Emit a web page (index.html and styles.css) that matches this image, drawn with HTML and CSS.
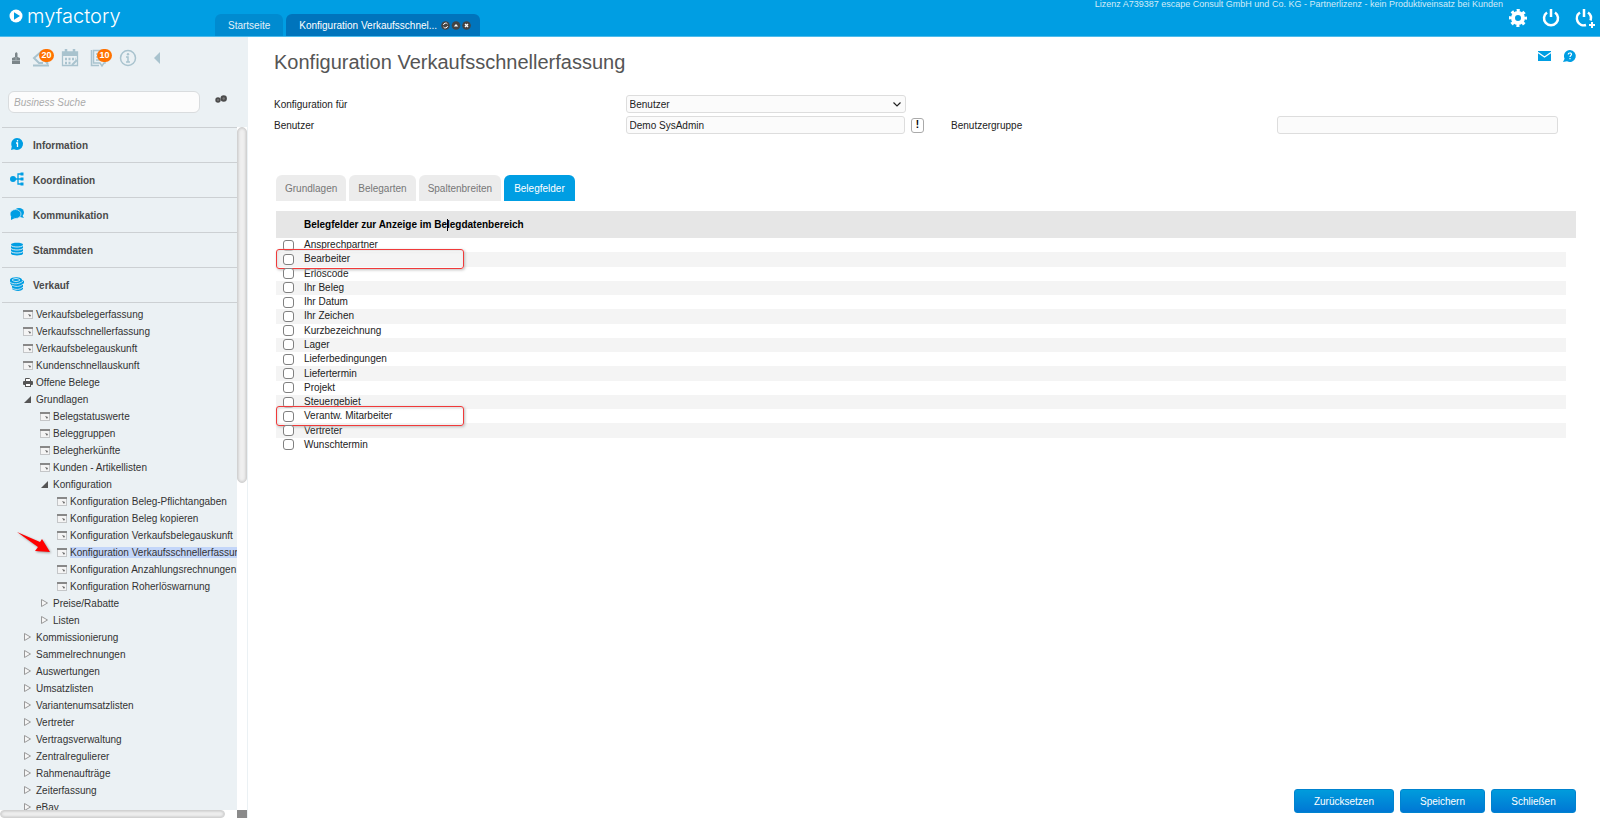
FILE: index.html
```
<!DOCTYPE html>
<html lang="de">
<head>
  <meta charset="UTF-8" />
  <meta name="viewport" content="width=device-width, initial-scale=1.0" />
  <title>myfactory - Konfiguration Verkaufsschnellerfassung</title>
  <link rel="stylesheet" href="styles.css">
</head>
<body>
  <!-- Shared icons -->
  <svg class="defs" aria-hidden="true">
    <symbol id="win" viewBox="0 0 10 9">
      <rect x="0.5" y="0.5" width="9" height="8" fill="#f4f4f4" stroke="#c4c6c8" />
      <rect x="0" y="0" width="10" height="2" fill="#888" />
      <path d="M5 4l3 1-1 2z" fill="#666" />
    </symbol>
    <symbol id="printer" viewBox="0 0 10 9">
      <path d="M2.5 3V.5h4l1 1V3" fill="#fff" stroke="#555" />
      <rect x="0" y="3" width="10" height="4" rx="1" fill="#555" />
      <rect x="2.5" y="5.5" width="5" height="3" fill="#fff" stroke="#555" />
    </symbol>
    <symbol id="open" viewBox="0 0 10 9">
      <path d="M8 1v7H1z" fill="#555" />
    </symbol>
    <symbol id="closed" viewBox="0 0 10 9">
      <path d="M1.500 .5v7l6-3.500z" fill="#f6f6f6" stroke="#999" />
    </symbol>
  </svg>

  <header>
    <a class="logo" href="#">
      <svg width="14" height="14" viewBox="0 0 14 14"><circle cx="7" cy="7" r="6.500" fill="#fff" /><path d="M5 3.300v7.400L11 7z" fill="#009ee3" /></svg>
      <span>myfactory</span>
    </a>
    <nav class="window-tabs">
      <a href="#">Startseite</a>
      <a href="#" class="active">Konfiguration Verkaufsschnel...
        <svg width="30" height="9" viewBox="0 0 30 9">
          <g fill="#444"><circle cx="4.500" cy="4.500" r="4.300" /><circle cx="15" cy="4.500" r="4.300" /><circle cx="25.500" cy="4.500" r="4.300" /></g>
          <path d="M6.500 3a2.200 2.200 0 0 0-4 1M2.500 6a2.200 2.200 0 0 0 4-1" fill="none" stroke="#fff" />
          <path d="M12.800 5.500h4.400L15 3z" fill="#fff" />
          <path d="M24 3l3 3M27 3l-3 3" stroke="#fff" stroke-width="1.400" />
        </svg>
      </a>
    </nav>
    <p class="license">Lizenz A739387 escape Consult GmbH und Co. KG - Partnerlizenz - kein Produktiveinsatz bei Kunden</p>
    <div class="header-buttons">
      <button aria-label="Einstellungen">
        <svg width="20" height="20" viewBox="0 0 20 20"><circle cx="10" cy="10" r="5" fill="none" stroke="#fff" stroke-width="4" /><circle cx="10" cy="10" r="7.500" fill="none" stroke="#fff" stroke-width="3" stroke-dasharray="3 2.890" stroke-dashoffset="1.500" /></svg>
      </button>
      <button aria-label="Abmelden">
        <svg width="20" height="20" viewBox="0 0 20 20"><path d="M6 4.500a7 7 0 1 0 8 0M10 1v8" fill="none" stroke="#fff" stroke-width="2.500" /></svg>
      </button>
      <button aria-label="Neu anmelden">
        <svg width="20" height="20" viewBox="0 0 20 20"><path d="M6 4.500a7 7 0 0 0 6 12.500M14 4.500a7 7 0 0 1 2.500 8M10 1v8" fill="none" stroke="#fff" stroke-width="2.500" /><path d="M18 14v6M15 17h6" stroke="#fff" stroke-width="2" /></svg>
      </button>
    </div>
  </header>

  <div class="page">
    <aside>
      <div class="toolbar">
        <a href="#" aria-label="Status"><svg width="10" height="14" viewBox="0 0 10 14"><path d="M4 2.500q1.500-2.500 2.500 0V6L9 7v6H1V7l3-1z" fill="#7b8589" /><path d="M5 6v4M1 9.500h8" stroke="#a5afb3" /></svg></a>
        <a href="#" aria-label="Eingang"><svg width="18" height="18" viewBox="0 0 18 18"><path d="M10 2L2 9l5 5h4M1 16.500h16M11 9l5 6" fill="none" stroke="#a9c3ce" stroke-width="2" /></svg><span class="badge">20</span></a>
        <a href="#" aria-label="Kalender"><svg width="18" height="18" viewBox="0 0 18 18"><path d="M1.500 3h15v13.500h-15z" fill="none" stroke="#a9c3ce" stroke-width="1.300" /><path d="M1 5h16" stroke="#a9c3ce" stroke-width="4" /><path d="M5 0v5M13 0v5" stroke="#a9c3ce" stroke-width="2.500" /><path d="M4 10h11M4 14h6" stroke="#a9c3ce" stroke-width="2.500" stroke-dasharray="2 1.500" /><path d="M11 16l5-5" stroke="#a9c3ce" stroke-width="2" /></svg></a>
        <a href="#" aria-label="Aufgaben"><svg width="18" height="18" viewBox="0 0 18 18"><path d="M3.500 1.500H15V14h-1l-2 3-2-3H3.500z" fill="none" stroke="#a9c3ce" stroke-width="1.500" /><path d="M1.500 1v15.500H9M6 5h6M6 8h6M6 11h6" fill="none" stroke="#a9c3ce" stroke-width="1.500" /></svg><span class="badge">10</span></a>
        <a href="#" aria-label="Info"><svg width="18" height="18" viewBox="0 0 18 18"><circle cx="9" cy="9" r="7.500" fill="none" stroke="#a9c3ce" stroke-width="1.500" /><path d="M7 8h2v5M7 13h4" fill="none" stroke="#a9c3ce" stroke-width="1.500" /><circle cx="9" cy="5.200" r="1.200" fill="#a9c3ce" /></svg></a>
        <a href="#" class="collapse" aria-label="Einklappen"><svg width="6" height="12" viewBox="0 0 6 12"><path d="M6 0v12L0 6z" fill="#a9c3ce" /></svg></a>
      </div>

      <div class="search">
        <input type="text" placeholder="Business Suche" aria-label="Business Suche" />
        <button aria-label="Suchen"><svg width="12" height="8" viewBox="0 0 12 8"><circle cx="3" cy="5" r="2.700" fill="#4c4c4c" /><circle cx="8.700" cy="3.500" r="3.200" fill="#4c4c4c" /><circle cx="3" cy="5" r="1" fill="#777" /><circle cx="8.700" cy="3.500" r="1.200" fill="#777" /></svg></button>
      </div>

      <div class="menu-area">
        <nav class="menu">
          <a class="section" href="#"><svg width="14" height="14" viewBox="0 0 14 14"><path d="M7 1a6 6 0 1 1-3 11.200L1 13l.8-3.500A6 6 0 0 1 7 1z" fill="#009ee3" /><path d="M6 6h1.500v4M7.500 3v1.500" fill="none" stroke="#fff" stroke-width="1.300" /></svg>Information</a>
          <a class="section" href="#"><svg width="14" height="14" viewBox="0 0 14 14"><circle cx="3" cy="7" r="3" fill="#009ee3" /><path d="M5 7h8M12 2H8v10h4" fill="none" stroke="#009ee3" stroke-width="1.300" /><path d="M10.500.5h3v3h-3zM10.500 5.500h3v3h-3zM10.500 10.500h3v3h-3z" fill="#009ee3" /></svg>Koordination</a>
          <a class="section" href="#"><svg width="14" height="14" viewBox="0 0 14 14"><ellipse cx="9" cy="5.500" rx="5" ry="4.500" fill="#009ee3" /><path d="M12 8l2 3-4-1z" fill="#009ee3" /><ellipse cx="5.500" cy="7" rx="5.500" ry="4.500" fill="#009ee3" stroke="#ebf1f4" stroke-width=".7" /><path d="M1 9v4l4-2z" fill="#009ee3" /></svg>Kommunikation</a>
          <a class="section" href="#"><svg width="14" height="14" viewBox="0 0 14 14"><path d="M1 2.500C1 0 13 0 13 2.500v9c0 2.500-12 2.500-12 0z" fill="#009ee3" /><path d="M1 3.500c2 2 10 2 12 0M1 6.500c2 2 10 2 12 0M1 9.500c2 2 10 2 12 0" fill="none" stroke="#ebf1f4" stroke-width=".9" /></svg>Stammdaten</a>
          <a class="section" href="#"><svg width="14" height="14" viewBox="0 0 14 14"><path d="M0 2.500C1-.5 12-.5 12 3l2 1v2l-1 1v5c-2 3-9 2-11 0V9L0 6z" fill="#009ee3" /><path d="M2 3c2 2 6 2 8 0-2-2-6-2-8 0M0 5c3 3 10 2 13-1M2 8c3 2 8 2 11-1M2 11c3 2 8 2 11-1" fill="none" stroke="#ebf1f4" stroke-width=".8" /></svg>Verkauf</a>

          <ul class="tree">
            <li><a href="#"><svg><use href="#win" /></svg><span>Verkaufsbelegerfassung</span></a></li>
            <li><a href="#"><svg><use href="#win" /></svg><span>Verkaufsschnellerfassung</span></a></li>
            <li><a href="#"><svg><use href="#win" /></svg><span>Verkaufsbelegauskunft</span></a></li>
            <li><a href="#"><svg><use href="#win" /></svg><span>Kundenschnellauskunft</span></a></li>
            <li><a href="#"><svg><use href="#printer" /></svg><span>Offene Belege</span></a></li>
            <li><a href="#"><svg><use href="#open" /></svg><span>Grundlagen</span></a>
              <ul>
                <li><a href="#"><svg><use href="#win" /></svg><span>Belegstatuswerte</span></a></li>
                <li><a href="#"><svg><use href="#win" /></svg><span>Beleggruppen</span></a></li>
                <li><a href="#"><svg><use href="#win" /></svg><span>Belegherkünfte</span></a></li>
                <li><a href="#"><svg><use href="#win" /></svg><span>Kunden - Artikellisten</span></a></li>
                <li><a href="#"><svg><use href="#open" /></svg><span>Konfiguration</span></a>
                  <ul>
                    <li><a href="#"><svg><use href="#win" /></svg><span>Konfiguration Beleg-Pflichtangaben</span></a></li>
                    <li><a href="#"><svg><use href="#win" /></svg><span>Konfiguration Beleg kopieren</span></a></li>
                    <li><a href="#"><svg><use href="#win" /></svg><span>Konfiguration Verkaufsbelegauskunft</span></a></li>
                    <li class="selected"><a href="#"><svg><use href="#win" /></svg><span>Konfiguration Verkaufsschnellerfassung</span></a>
                      <svg class="arrow" viewBox="0 0 36 24"><path d="M1 2l23 10 2-3 8 13-15-1 3-4z" fill="#f00" /></svg>
                    </li>
                    <li><a href="#"><svg><use href="#win" /></svg><span>Konfiguration Anzahlungsrechnungen</span></a></li>
                    <li><a href="#"><svg><use href="#win" /></svg><span>Konfiguration Roherlöswarnung</span></a></li>
                  </ul>
                </li>
                <li><a href="#"><svg><use href="#closed" /></svg><span>Preise/Rabatte</span></a></li>
                <li><a href="#"><svg><use href="#closed" /></svg><span>Listen</span></a></li>
              </ul>
            </li>
            <li><a href="#"><svg><use href="#closed" /></svg><span>Kommissionierung</span></a></li>
            <li><a href="#"><svg><use href="#closed" /></svg><span>Sammelrechnungen</span></a></li>
            <li><a href="#"><svg><use href="#closed" /></svg><span>Auswertungen</span></a></li>
            <li><a href="#"><svg><use href="#closed" /></svg><span>Umsatzlisten</span></a></li>
            <li><a href="#"><svg><use href="#closed" /></svg><span>Variantenumsatzlisten</span></a></li>
            <li><a href="#"><svg><use href="#closed" /></svg><span>Vertreter</span></a></li>
            <li><a href="#"><svg><use href="#closed" /></svg><span>Vertragsverwaltung</span></a></li>
            <li><a href="#"><svg><use href="#closed" /></svg><span>Zentralregulierer</span></a></li>
            <li><a href="#"><svg><use href="#closed" /></svg><span>Rahmenaufträge</span></a></li>
            <li><a href="#"><svg><use href="#closed" /></svg><span>Zeiterfassung</span></a></li>
            <li><a href="#"><svg><use href="#closed" /></svg><span>eBay</span></a></li>
          </ul>
        </nav>
        <div class="scroll-y"><div class="thumb"></div></div>
        <div class="scroll-x"><div class="thumb"></div></div>
        <div class="corner"></div>
      </div>
    </aside>

    <main>
      <div class="title">
        <h1>Konfiguration Verkaufsschnellerfassung</h1>
        <a href="#" aria-label="E-Mail"><svg width="13" height="10" viewBox="0 0 13 10"><path d="M0 0h13v10H0z" fill="#009ee3" /><path d="M0 1.500l6.500 4.500L13 1.500" fill="none" stroke="#fff" stroke-width="1.300" /></svg></a>
        <a href="#" aria-label="Hilfe"><svg width="13" height="12" viewBox="0 0 13 12"><path d="M7 0a6 6 0 1 1-3 11.300L0 12l1.600-3.300A6 6 0 0 1 7 0z" fill="#009ee3" /><path d="M5.200 4.500C5.200 2.500 8.500 2.500 8.500 4.300 8.500 5.500 7 5.500 7 7M7 8v1.300" fill="none" stroke="#fff" stroke-width="1.200" /></svg></a>
      </div>

      <!-- Filter -->
      <form class="filter">
        <label for="scope">Konfiguration für</label>
        <div class="field"><select id="scope"><option>Benutzer</option></select></div>
        <label class="newline" for="user">Benutzer</label>
        <div class="field with-button">
          <input type="text" id="user" value="Demo SysAdmin" />
          <button type="button">!</button>
        </div>
        <label for="group">Benutzergruppe</label>
        <div class="field last"><input type="text" id="group" /></div>
      </form>

      <nav class="tabs">
        <button>Grundlagen</button>
        <button>Belegarten</button>
        <button>Spaltenbreiten</button>
        <button class="active">Belegfelder</button>
      </nav>

      <div class="table-head"><b>Belegfelder zur Anzeige im Be<i class="caret"></i>legdatenbereich</b></div>
      <table class="fields">
        <tr><td><input type="checkbox" id="f1" /></td><td><label for="f1">Ansprechpartner</label></td></tr>
        <tr><td><span class="mark"></span><input type="checkbox" id="f2" /></td><td><label for="f2">Bearbeiter</label></td></tr>
        <tr><td><input type="checkbox" id="f3" /></td><td><label for="f3">Erlöscode</label></td></tr>
        <tr><td><input type="checkbox" id="f4" /></td><td><label for="f4">Ihr Beleg</label></td></tr>
        <tr><td><input type="checkbox" id="f5" /></td><td><label for="f5">Ihr Datum</label></td></tr>
        <tr><td><input type="checkbox" id="f6" /></td><td><label for="f6">Ihr Zeichen</label></td></tr>
        <tr><td><input type="checkbox" id="f7" /></td><td><label for="f7">Kurzbezeichnung</label></td></tr>
        <tr><td><input type="checkbox" id="f8" /></td><td><label for="f8">Lager</label></td></tr>
        <tr><td><input type="checkbox" id="f9" /></td><td><label for="f9">Lieferbedingungen</label></td></tr>
        <tr><td><input type="checkbox" id="f10" /></td><td><label for="f10">Liefertermin</label></td></tr>
        <tr><td><input type="checkbox" id="f11" /></td><td><label for="f11">Projekt</label></td></tr>
        <tr><td><input type="checkbox" id="f12" /></td><td><label for="f12">Steuergebiet</label></td></tr>
        <tr><td><span class="mark"></span><input type="checkbox" id="f13" /></td><td><label for="f13">Verantw. Mitarbeiter</label></td></tr>
        <tr><td><input type="checkbox" id="f14" /></td><td><label for="f14">Vertreter</label></td></tr>
        <tr><td><input type="checkbox" id="f15" /></td><td><label for="f15">Wunschtermin</label></td></tr>
      </table>

      <div class="actions">
        <button>Zurücksetzen</button>
        <button>Speichern</button>
        <button>Schließen</button>
      </div>
    </main>
  </div>
</body>
</html>
```
FILE: styles.css
```
* { box-sizing: border-box; }
body {
  margin: 0;
  height: 100vh;
  display: flex;
  flex-direction: column;
  overflow: hidden;
  font-family: "Liberation Sans", Arial, sans-serif;
  font-size: 10px;
  color: #222;
  background: #fff;
}
a {
  color: inherit;
  text-decoration: none;
}
button, input, select {
  font-family: inherit;
  font-size: 10px;
  color: inherit;
}
button {
  padding: 0;
  border: none;
  background: none;
  cursor: pointer;
}
svg {
  flex: none;
  display: block;
  overflow: visible;
}
.defs {
  position: absolute;
  width: 0;
  height: 0;
}

/* Header */
header {
  flex: none;
  height: 37px;
  display: flex;
  background: #009ee3;
  border-bottom: 1px solid #4dbbeb;
  color: #fff;
}
.logo {
  width: 215px;
  padding-left: 9px;
  display: flex;
  gap: 4px;
  height: 32px;
  align-items: center;
  font-family: Inter, sans-serif;
  font-weight: 300;
  font-size: 20px;
}
.window-tabs {
  display: flex;
  align-items: flex-end;
  gap: 3px;
}
.window-tabs a {
  height: 22px;
  padding: 0 13px;
  display: flex;
  align-items: center;
  gap: 4px;
  background: #008bd0;
  border-radius: 6px 6px 0 0;
  color: #e3f1f9;
}
.window-tabs a.active {
  padding: 0 9px 0 13px;
  background: #0074bc;
  color: #fff;
}
.license {
  margin: 0 0 0 auto;
  line-height: 9px;
  font-size: 9px;
  color: #d3ecf8;
}
.header-buttons {
  display: flex;
  align-items: center;
  gap: 13px;
  padding: 0 6px 0 5px;
}

.page {
  flex: 1;
  min-height: 0;
  display: flex;
}

/* Sidebar */
aside {
  flex: none;
  width: 248px;
  display: flex;
  flex-direction: column;
  background: #ebf1f4;
}
.toolbar {
  height: 42px;
  padding-left: 11px;
  display: flex;
  align-items: center;
  gap: 11px;
}
.toolbar a {
  position: relative;
}
.toolbar .collapse {
  margin-left: 6px;
}
.badge {
  position: absolute;
  top: 0;
  left: 7px;
  width: 15px;
  height: 13px;
  border-radius: 7px;
  background: #ff7200;
  color: #fff;
  font-size: 9px;
  font-weight: bold;
  line-height: 13px;
  text-align: center;
}
.search {
  height: 48px;
  padding: 12px 20px 14px 8px;
  display: flex;
  gap: 15px;
}
.search input {
  width: 192px;
  height: 22px;
  padding: 0 5px;
  border: 1px solid #d9dcde;
  border-radius: 6px;
  background: #fcfcfc;
}
.search input::placeholder {
  color: #aaa;
  font-style: italic;
}
.search button {
  height: 16px;
}
.menu-area {
  flex: 1;
  min-height: 0;
  display: grid;
  grid-template-columns: 1fr 11px;
  grid-template-rows: 1fr 8px;
}
.menu {
  overflow: hidden;
}
.section {
  height: 35px;
  margin-left: 2px;
  padding-left: 8px;
  display: flex;
  align-items: center;
  gap: 9px;
  border-top: 1px solid #ccd0d3;
  font-weight: bold;
  color: #4a4a4a;
}
.section svg {
  margin-bottom: 2px;
}
.tree {
  margin: 0 0 0 2px;
  padding: 3px 0 0 21px;
  border-top: 1px solid #ccd0d3;
  list-style: none;
  color: #333;
}
.tree ul {
  margin: 0;
  padding: 0 0 0 17px;
  list-style: none;
}
.tree a {
  height: 17px;
  display: flex;
  align-items: center;
  gap: 3px;
  white-space: nowrap;
}
.tree a svg {
  width: 10px;
  height: 9px;
}
.selected {
  position: relative;
}
.selected span {
  background: #c3d6f9;
}
.arrow {
  position: absolute;
  left: -41px;
  top: -14px;
  width: 36px;
  height: 24px;
  filter: drop-shadow(1px 1px 1px #999);
}
.scroll-y {
  background: #fff;
  border-right: 1px solid #ebf1f4;
}
.scroll-y .thumb {
  height: 356px;
}
.thumb {
  border: 1px solid #d2d2d2;
  border-radius: 5px;
  background: #efefef;
  box-shadow: inset 0 0 3px #bbb;
}
.scroll-x {
  background: #fff;
}
.scroll-x .thumb {
  width: 95%;
  height: 8px;
}
.corner {
  width: 10px;
  background: #8a8a8a;
}

/* Content */
main {
  flex: 1;
  min-width: 0;
  padding: 0 24px 5px 26px;
  display: flex;
  flex-direction: column;
}
.title {
  height: 50px;
  display: flex;
  align-items: center;
  gap: 12px;
}
.title a {
  margin-bottom: 13px;
}
h1 {
  flex: 1;
  margin: 0;
  font-size: 20px;
  font-weight: normal;
  color: #555;
}
.filter {
  padding: 8px 0 41px;
  display: grid;
  grid-template-columns: 27% 25% 25% 1fr;
  row-gap: 3px;
  align-items: center;
}
.newline {
  grid-column: 1;
}
.field {
  display: flex;
  gap: 6px;
  padding-right: 45px;
}
.with-button {
  padding-right: 27px;
}
.field.last {
  padding-right: 18px;
}
.field input, .field select {
  flex: 1;
  min-width: 0;
  height: 18px;
  padding: 0 3px;
  border: 1px solid #ddd;
  border-radius: 3px;
  background: #fbfbfb;
}
.field select {
  appearance: none;
  background: #fbfbfb url("data:image/svg+xml,%3Csvg xmlns='http://www.w3.org/2000/svg' width='8' height='5'%3E%3Cpath d='M.5.500l3.500 3.500L7.500.500' fill='none' stroke='%23222' stroke-width='1.200'/%3E%3C/svg%3E") no-repeat right 4px center;
}
.field button {
  width: 13px;
  height: 15px;
  align-self: center;
  border: 1px solid #aaa;
  border-radius: 3px;
  font-weight: bold;
  line-height: 12px;
  color: #000;
}
.tabs {
  margin-left: 2px;
  display: flex;
  gap: 3px;
}
.tabs button {
  height: 26px;
  padding: 0 9px;
  border-radius: 6px 6px 0 0;
  background: #ececec;
  color: #777;
}
.tabs button.active {
  padding: 0 10px;
  background: #009ee3;
  color: #fff;
}
.table-head {
  margin: 10px 0 0 2px;
  padding-left: 28px;
  height: 27px;
  line-height: 28px;
  background: #e6e6e6;
  color: #000;
}
.caret {
  position: relative;
}
.caret::after {
  content: "";
  position: absolute;
  left: 0;
  top: 0;
  width: 1px;
  height: 12px;
  background: #000;
}
.fields {
  height: 214px;
  margin: 0 10px 0 2px;
  border-collapse: collapse;
}
.fields tr:nth-child(even) {
  background: #f4f4f4;
}
.fields td {
  padding: 0;
  line-height: 12px;
}
.fields td:first-child {
  position: relative;
  width: 28px;
  padding-left: 7px;
}
.fields input {
  appearance: none;
  display: block;
  width: 11px;
  height: 11px;
  margin: 0;
  border: 1px solid #808080;
  border-radius: 3px;
  background: #fff;
}
.fields input:checked {
  background: #009ee3;
}
.mark {
  position: absolute;
  left: 0;
  top: -3px;
  width: 188px;
  height: 20px;
  border: 1px solid #f03a3a;
  border-radius: 3px;
  box-shadow: 1px 1px 3px #bbb, inset 1px 1px 3px #ddd;
  pointer-events: none;
}
.actions {
  margin-top: auto;
  display: flex;
  justify-content: flex-end;
  gap: 6px;
}
.actions button {
  height: 24px;
  min-width: 85px;
  padding: 0 19px;
  border: 1px solid #0083cf;
  border-radius: 3px;
  background: linear-gradient(#009cdc, #0077d4);
  color: #fff;
}
```
